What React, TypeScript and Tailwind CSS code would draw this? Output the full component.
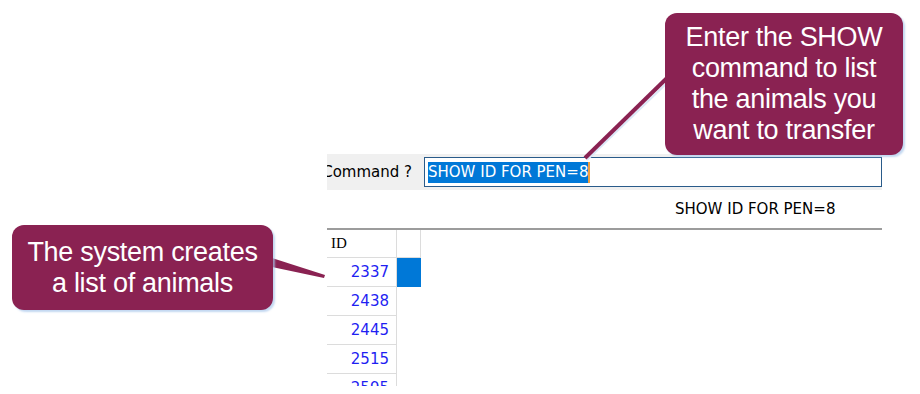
import React from 'react';

const ids = [2337, 2438, 2445, 2515, 2595];

const Callout: React.FC<{ className: string; lines: string[] }> = ({ className, lines }) => (
  <div
    className={`absolute flex flex-col items-center justify-center rounded-[12px] bg-[#8a2252] text-white text-[27px] leading-[31px] tracking-[-0.3px] font-['Liberation_Sans',Arial,sans-serif] shadow-[2px_2px_2px_rgba(170,200,235,0.7)] ${className}`}
  >
    {lines.map((l) => (
      <div key={l} className="whitespace-nowrap">
        {l}
      </div>
    ))}
  </div>
);

export default function App() {
  return (
    <div className="relative w-[920px] h-[394px] overflow-hidden bg-white font-['DejaVu_Sans',Verdana,sans-serif]">
      {/* app window crop */}
      <div className="ml-[327px] mt-[154px] w-[555px] h-[232px] overflow-hidden flex flex-col">
        <div className="h-[36px] shrink-0 bg-[#f0f0f0] flex items-center">
          <div className="w-[97px] shrink-0 overflow-hidden flex justify-end pr-[12px]">
            <span className="whitespace-nowrap text-[15px] text-black">Command ?</span>
          </div>
          <div className="flex-1 h-[30px] bg-white border border-[#2a5b8a] flex items-center pl-[3px]">
            <span className="bg-[#0078d7] text-white text-[15px] leading-[21px] whitespace-nowrap">SHOW ID FOR PEN=8</span>
            <span className="w-[2px] h-[21px] bg-[#f0a040]" />
          </div>
        </div>

        <div className="h-[38px] shrink-0 flex items-center pl-[348px]">
          <span className="text-[15px] text-black whitespace-nowrap">SHOW ID FOR PEN=8</span>
        </div>

        <div className="border-t-2 border-[#9c9c9c] shrink-0">
          <div className="flex h-[28px]">
            <div className="w-[70px] border-r border-b border-[#dcdcdc] flex items-center pl-[4px] font-['Liberation_Serif',serif] text-[15px] text-black">
              ID
            </div>
            <div className="w-[24px] border-r border-b border-[#dcdcdc]" />
          </div>
          {ids.map((id, i) => (
            <div key={id} className="flex h-[29px]">
              <div className="w-[70px] border-r border-b border-[#dcdcdc] flex items-center justify-end pr-[7px] text-[15px] text-[#1f1ff2]">
                {id}
              </div>
              {i === 0 ? <div className="w-[24px] bg-[#0078d7]" /> : null}
            </div>
          ))}
        </div>
      </div>

      {/* callout pointers */}
      <svg className="absolute left-0 top-0" width="920" height="394">
        <line x1="667" y1="79" x2="585" y2="158" stroke="#dbe8f7" strokeWidth="2" transform="translate(2,2)" />
        <line x1="667" y1="78" x2="585" y2="158" stroke="#8a2252" strokeWidth="4" />
        <polygon points="272,258 272,267 324,278 325,275" fill="#8a2252" />
      </svg>

      <Callout
        className="left-[665px] top-[13px] w-[238px] h-[142px]"
        lines={['Enter the SHOW', 'command to list', 'the animals you', 'want to transfer']}
      />
      <Callout className="left-[12px] top-[225px] w-[261px] h-[85px]" lines={['The system creates', 'a list of animals']} />
    </div>
  );
}
